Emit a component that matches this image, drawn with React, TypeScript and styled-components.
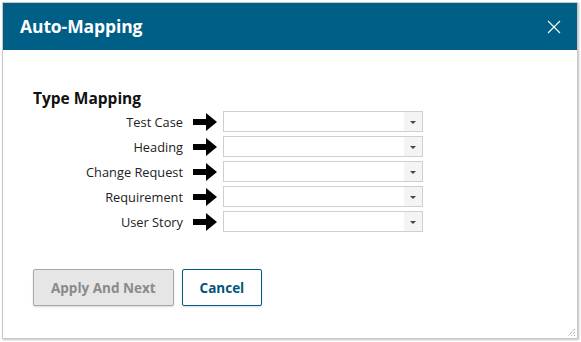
import React from 'react';
import styled, { createGlobalStyle } from 'styled-components';

const types = ['Test Case', 'Heading', 'Change Request', 'Requirement', 'User Story'];

const GlobalStyle = createGlobalStyle`
  html, body {
    margin: 0;
    padding: 0;
    background: #ffffff;
  }
  body {
    font-family: "Open Sans", "Noto Sans", "Liberation Sans", sans-serif;
  }
`;

const Page = styled.div`
  width: 581px;
  height: 342px;
  padding: 2px 3px 3px 2px;
  box-sizing: border-box;
`;

const Dialog = styled.div`
  position: relative;
  height: 100%;
  box-sizing: border-box;
  border: 1px solid #c9c9c9;
  box-shadow: 1px 1px 2px rgba(0, 0, 0, 0.25);
  background: #fff;
  display: flex;
  flex-direction: column;
`;

const Header = styled.header`
  height: 47px;
  background: #005f87;
  display: flex;
  align-items: center;
  justify-content: space-between;
  padding: 0 16px 0 17px;
`;

const Title = styled.h1`
  margin: 0 0 2px;
  color: #fff;
  font-size: 17.5px;
  font-weight: 700;
  letter-spacing: -0.1px;
`;

const Close = styled.button`
  border: 0;
  background: none;
  padding: 0;
  width: 14px;
  height: 14px;
  display: flex;
  cursor: pointer;
`;

const Body = styled.div`
  flex: 1;
  padding: 37px 30px 0;
`;

const Heading = styled.h2`
  margin: 0 0 2px;
  font-size: 15.5px;
  font-weight: 700;
  color: #111;
`;

const Rows = styled.div`
  display: grid;
  grid-template-columns: 154px 24px 200px;
  column-gap: 6px;
  row-gap: 4px;
  align-items: center;
`;

const Label = styled.span`
  text-align: right;
  font-size: 12.8px;
  color: #222;
  padding-right: 4px;
`;

const Select = styled.div`
  height: 21px;
  box-sizing: border-box;
  border: 1px solid #cfcfcf;
  display: flex;
  justify-content: flex-end;
  background: #fff;
`;

const Caret = styled.span`
  width: 18px;
  background: #f4f4f4;
  display: flex;
  align-items: center;
  justify-content: center;
  padding-top: 2px;
  &::after {
    content: '';
    border-left: 3px solid transparent;
    border-right: 3px solid transparent;
    border-top: 3px solid #444;
  }
`;

const Actions = styled.div`
  display: flex;
  gap: 8px;
  margin-top: 37px;
`;

const Button = styled.button<{ $primary?: boolean }>`
  height: 37px;
  padding: 0 17px;
  box-sizing: border-box;
  font-family: inherit;
  font-size: 13.5px;
  font-weight: 700;
  border-radius: 2px;
  border: 1px solid ${(p) => (p.$primary ? '#a8a8a8' : '#005f87')};
  background: ${(p) => (p.$primary ? '#e6e6e6' : '#fff')};
  color: ${(p) => (p.$primary ? '#8a8a8a' : '#00567a')};
  box-shadow: 0 1px 2px rgba(0, 0, 0, 0.15);
`;

const Grip = styled.svg`
  position: absolute;
  right: 1px;
  bottom: 1px;
`;

const Arrow = () => (
  <svg width="24" height="18" viewBox="0 0 24 18" style={{ display: 'block' }}>
    <path d="M0 6 H13 V0 L24 9 L13 18 V12 H0 Z" fill="#000" />
  </svg>
);

const App: React.FC = () => (
  <Page>
    <GlobalStyle />
    <Dialog>
      <Header>
        <Title>Auto-Mapping</Title>
        <Close aria-label="Close">
          <svg width="14" height="14" viewBox="0 0 14 14">
            <path d="M1 1 L13 13 M13 1 L1 13" stroke="#fff" strokeWidth="1.1" />
          </svg>
        </Close>
      </Header>
      <Body>
        <Heading>Type Mapping</Heading>
        <Rows>
          {types.map((t) => (
            <React.Fragment key={t}>
              <Label>{t}</Label>
              <Arrow />
              <Select>
                <Caret />
              </Select>
            </React.Fragment>
          ))}
        </Rows>
        <Actions>
          <Button $primary disabled>Apply And Next</Button>
          <Button>Cancel</Button>
        </Actions>
      </Body>
      <Grip width="10" height="10" viewBox="0 0 10 10">
        <path d="M9 2 L2 9 M9 5 L5 9 M9 8 L8 9" stroke="#888" strokeWidth="1" strokeDasharray="1 1" />
      </Grip>
    </Dialog>
  </Page>
);

export default App;
